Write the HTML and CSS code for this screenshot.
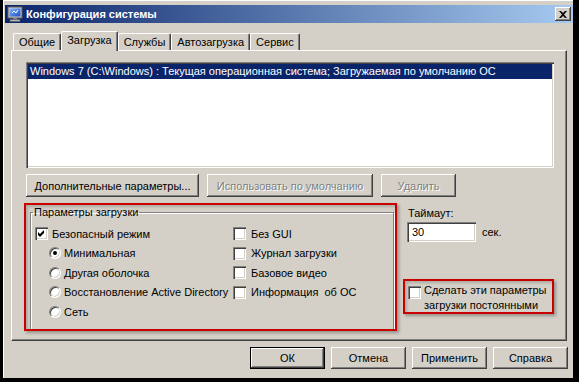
FILE: index.html
```html
<!DOCTYPE html>
<html lang="ru">
<head>
  <meta charset="UTF-8">
  <title>Конфигурация системы</title>
  <link rel="stylesheet" href="styles.css">
</head>
<body>

  <div class="window">
    <div class="titlebar">
      <svg class="app-icon" width="16" height="16" viewBox="0 0 16 16">
        <defs>
          <linearGradient id="scr" x1="0" y1="0" x2="1" y2="1">
            <stop offset="0" stop-color="#7fb6ff"/>
            <stop offset="1" stop-color="#1a4fc4"/>
          </linearGradient>
        </defs>
        <rect x="1" y="1" width="14" height="11" fill="#c8c8c8" stroke="#5a5a5a" stroke-width="1"/>
        <rect x="2.5" y="2.5" width="11" height="8" fill="url(#scr)"/>
        <path d="M5 7 L7 5 L9 7 L11 4" stroke="#fff" stroke-width="1" fill="none"/>
        <rect x="6" y="12" width="4" height="1.5" fill="#8a8a8a"/>
        <rect x="3" y="13.5" width="10" height="2" fill="#b8b8b8" stroke="#5a5a5a" stroke-width="0.6"/>
      </svg>
      <span class="title">Конфигурация системы</span>
      <button class="close-btn">
        <svg width="8" height="7" viewBox="0 0 8 7">
          <path d="M0 0 H2 L4 2 L6 0 H8 L5 3.5 L8 7 H6 L4 5 L2 7 H0 L3 3.5 Z" fill="#000"/>
        </svg>
      </button>
    </div>

    <div class="tabs">
      <div class="tab">Общие</div>
      <div class="tab active">Загрузка</div>
      <div class="tab">Службы</div>
      <div class="tab">Автозагрузка</div>
      <div class="tab">Сервис</div>
    </div>

    <div class="panel">
      <div class="listbox">
        <div class="list-item selected">Windows 7 (C:\Windows) : Текущая операционная система; Загружаемая по умолчанию ОС</div>
      </div>

      <div class="btn-row">
        <button class="btn btn-advanced">Дополнительные параметры...</button>
        <button class="btn btn-set-default" disabled>Использовать по умолчанию</button>
        <button class="btn btn-delete" disabled>Удалить</button>
      </div>

      <div class="lower">
        <div class="marked boot-box">
          <fieldset class="group">
            <legend>Параметры загрузки</legend>
            <div class="options">
              <div class="opt">
                <span class="check"><svg width="7" height="7" viewBox="0 0 7 7"><path d="M0 2 L2 4 L6 0 V3 L2 7 L0 5 Z" fill="#000"/></svg></span>
                Безопасный режим
              </div>
              <div class="opt sub"><span class="radio"><span class="dot"></span></span>Минимальная</div>
              <div class="opt sub"><span class="radio"></span>Другая оболочка</div>
              <div class="opt sub"><span class="radio"></span>Восстановление Active Directory</div>
              <div class="opt sub"><span class="radio"></span>Сеть</div>

              <div class="opt right"><span class="check"></span>Без GUI</div>
              <div class="opt right"><span class="check"></span>Журнал загрузки</div>
              <div class="opt right"><span class="check"></span>Базовое видео</div>
              <div class="opt right"><span class="check"></span>Информация&nbsp; об ОС</div>
            </div>
          </fieldset>
        </div>

        <div class="side">
          <div class="timeout-label">Таймаут:</div>
          <div class="timeout-row">
            <div class="textbox">30</div>
            <span>сек.</span>
          </div>
          <div class="marked persist">
            <span class="check"></span>
            <span class="persist-text">Сделать эти параметры<br>загрузки постоянными</span>
          </div>
        </div>
      </div>
    </div>

    <div class="dialog-buttons">
      <button class="btn btn-ok">ОК</button>
      <button class="btn">Отмена</button>
      <button class="btn">Применить</button>
      <button class="btn">Справка</button>
    </div>
  </div>

</body>
</html>
```

FILE: styles.css
```css
body {
  margin: 0;
  background-color: #000;
  font-family: "Liberation Sans", Arial, sans-serif;
  font-size: 11px;
  color: #000;
}

.window {
  margin-left: 3px;
  width: 570px;
  height: 378px;
  box-sizing: border-box;
  background-color: #d4d0c8;
  border-left: 1px solid #fff;
  border-top: 1px solid #fff;
  padding: 4px 0 0 1px;
}

/* title bar */
.titlebar {
  display: flex;
  align-items: center;
  height: 18px;
  padding-left: 2px;
  background: linear-gradient(to right, #0a246a, #a6caf0);
  color: #fff;
}

.app-icon {
  flex: none;
}

.title {
  margin-left: 3px;
  font-weight: bold;
  font-size: 11px;
  flex: 1;
}

.close-btn {
  width: 16px;
  height: 14px;
  margin-right: 2px;
  padding: 0;
  border: none;
  background-color: #d4d0c8;
  box-shadow: inset -1px -1px #404040, inset 1px 1px #fff, inset -2px -2px #808080;
  display: flex;
  align-items: center;
  justify-content: center;
}

/* tabs */
.tabs {
  display: flex;
  align-items: flex-end;
  height: 19px;
  margin: 8px 0 0 8px;
  position: relative;
  z-index: 1;
}

.tab {
  height: 17px;
  box-sizing: border-box;
  padding: 1px 5px 0;
  line-height: 15px;
  border-top: 1px solid #fff;
  border-left: 1px solid #fff;
  border-right: 1px solid #404040;
  border-radius: 2px 2px 0 0;
  box-shadow: inset -1px 0 #808080;
}

.tab.active {
  height: 20px;
  margin-bottom: -1px;
  padding-top: 1px;
  background-color: #d4d0c8;
}

.panel {
  position: relative;
  margin-left: 6px;
  width: 556px;
  height: 291px;
  box-sizing: border-box;
  border-top: 1px solid #fff;
  border-left: 1px solid #fff;
  border-right: 1px solid #404040;
  border-bottom: 1px solid #404040;
  box-shadow: inset -1px -1px #808080;
  padding: 11px 0 0 14px;
}

/* list */
.listbox {
  width: 528px;
  height: 106px;
  box-sizing: border-box;
  padding: 2px;
  background-color: #fff;
  box-shadow: inset 1px 1px #808080, inset 2px 2px #404040, inset -1px -1px #fff, inset -2px -2px #d4d0c8;
}

.list-item {
  height: 15px;
  line-height: 15px;
  padding-left: 2px;
  white-space: nowrap;
}

.list-item.selected {
  background-color: #0a246a;
  color: #fff;
}

/* buttons */
.btn {
  font: inherit;
  color: #000;
  height: 23px;
  padding: 0;
  border: none;
  background-color: #d4d0c8;
  box-shadow: inset -1px -1px #404040, inset 1px 1px #fff, inset -2px -2px #808080;
}

.btn:disabled {
  color: #808080;
  text-shadow: 1px 1px #fff;
}

.btn-row {
  display: flex;
  gap: 8px;
  margin-top: 6px;
}

.btn-advanced {
  width: 173px;
}

.btn-set-default {
  width: 166px;
}

.btn-delete {
  width: 75px;
}

/* lower area */
.lower {
  display: flex;
  margin-top: 6px;
  margin-left: -2px;
}

.marked {
  border: 2px solid #c80000;
  box-sizing: border-box;
  box-shadow: 2px 2px 3px rgba(0, 0, 0, 0.3), inset 2px 2px 3px rgba(0, 0, 0, 0.18);
}

.boot-box {
  width: 373px;
  height: 128px;
  overflow: hidden;
}

.group {
  margin: 1px 1px 0 4px;
  height: 126px;
  box-sizing: border-box;
  padding: 5px 0 0 4px;
  border: 1px solid #808080;
  box-shadow: inset 1px 1px #fff, 1px 1px #fff;
}

.group legend {
  margin-left: -2px;
  padding: 0 1px;
  line-height: 13px;
}

.options {
  display: grid;
  grid-template-columns: 198px auto;
  grid-template-rows: repeat(5, 19.5px);
  grid-auto-flow: column;
}

.opt {
  display: flex;
  align-items: center;
  gap: 4px;
  white-space: nowrap;
}

.opt.sub {
  margin-left: 14px;
  gap: 3px;
}

.opt.right {
  gap: 5px;
}

.check {
  flex: none;
  width: 13px;
  height: 13px;
  box-sizing: border-box;
  background-color: #fff;
  box-shadow: inset 1px 1px #808080, inset 2px 2px #404040, inset -1px -1px #fff, inset -2px -2px #d4d0c8;
  display: flex;
  align-items: center;
  justify-content: center;
}

.radio {
  flex: none;
  width: 12px;
  height: 12px;
  box-sizing: border-box;
  border-radius: 50%;
  background-color: #fff;
  border: 1px solid;
  border-color: #808080 #fff #fff #808080;
  box-shadow: inset 1px 1px #404040, inset -1px -1px #d4d0c8;
  display: flex;
  align-items: center;
  justify-content: center;
}

.dot {
  width: 4px;
  height: 4px;
  border-radius: 50%;
  background-color: #000;
}

/* right side */
.side {
  margin-left: 6px;
  width: 151px;
}

.timeout-label {
  margin: 4px 0 0 5px;
  line-height: 13px;
}

.timeout-row {
  display: flex;
  align-items: center;
  gap: 6px;
  margin: 2px 0 0 4px;
}

.textbox {
  width: 69px;
  height: 20px;
  box-sizing: border-box;
  padding-left: 5px;
  line-height: 20px;
  background-color: #fff;
  box-shadow: inset 1px 1px #808080, inset 2px 2px #404040, inset -1px -1px #fff, inset -2px -2px #d4d0c8;
}

.persist {
  display: flex;
  align-items: flex-start;
  gap: 3px;
  margin-top: 37px;
  padding: 2px 0 0 3px;
  height: 35px;
}

.persist .check {
  margin-top: 3px;
}

.persist-text {
  line-height: 15px;
}

/* dialog buttons */
.dialog-buttons {
  display: flex;
  justify-content: flex-end;
  gap: 6px;
  margin-top: 6px;
  padding-right: 5px;
}

.dialog-buttons .btn {
  width: 75px;
  height: 22px;
}

.btn-ok {
  box-shadow: inset 0 0 0 1px #000, inset -2px -2px #404040, inset 2px 2px #fff, inset -3px -3px #808080;
}
```
